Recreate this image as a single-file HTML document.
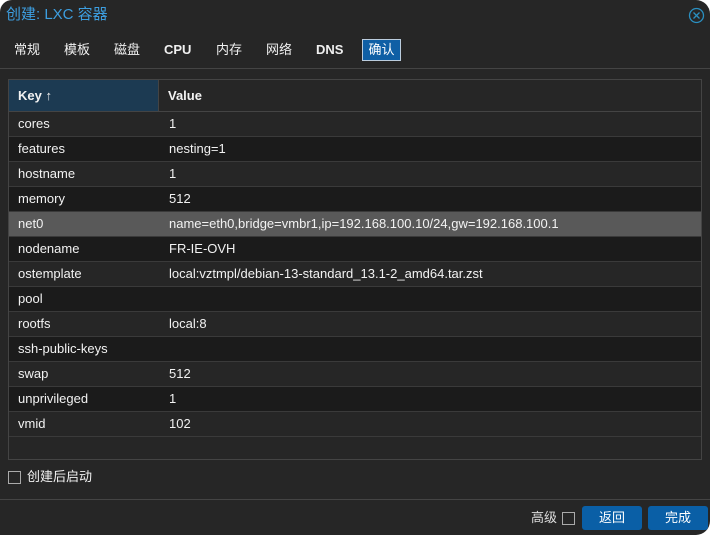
<!DOCTYPE html>
<html><head><meta charset="utf-8"><style>
*{box-sizing:border-box;margin:0;padding:0}
body{width:710px;height:535px;background:#fff;font-family:"Liberation Sans","Noto Sans CJK SC",sans-serif;font-size:13px;color:#f2f2f2;overflow:hidden;position:relative}
.dlg{position:absolute;left:0;top:0;width:710px;height:535px;background:#262626;border-radius:12px 14px 14px 0}
.title{position:absolute;left:6px;top:5px;font-size:15px;line-height:20px;color:#3d9ee0}
.close{position:absolute;left:688px;top:7px}
.tabs span{position:absolute;top:42px;height:16px;line-height:16px;font-size:13px;color:#f0f0f0}
.tabs span.l{font-weight:bold}
.tab-on{position:absolute;left:362px;top:39px;width:39px;height:22px;background:#0f5fa5;border:1px solid #bcd;color:#fff;text-align:center;line-height:20px}
.sep{position:absolute;left:0;width:710px;height:1px;background:#444}
.grid{position:absolute;left:8px;top:79px;width:694px;height:381px;border:1px solid #444;background:#262626}
.hdr{height:32px;display:flex;border-bottom:1px solid #444}
.hdr div{line-height:31px;padding-left:9px;font-weight:bold}
.row{height:25px;display:flex;border-bottom:1px solid #3a3a3a;line-height:24px}
.row div:first-child,.hdr div:first-child{width:150px}
.row div{padding-left:9px}
.row div:last-child{padding-left:10px}
.o{background:#262626}.e{background:#1b1b1b}.sel{background:#595959}
.btn{position:absolute;top:506px;width:60px;height:24px;background:#0a5fa6;border-radius:3px;color:#fff;text-align:center;line-height:24px}
.cb{position:absolute;width:13px;height:13px;border:1px solid #aaa}
</style></head><body>
<div class="dlg">
<div class="title">创建: LXC 容器</div>
<svg class="close" width="17" height="17" viewBox="0 0 17 17"><circle cx="8.5" cy="8.5" r="7" fill="none" stroke="#2a8fc0" stroke-width="1.3"/><path d="M5.5 5.5L11.5 11.5M11.5 5.5L5.5 11.5" stroke="#2a8fc0" stroke-width="1.3"/></svg>
<div class="tabs">
<span style="left:14px">常规</span><span style="left:64px">模板</span><span style="left:114px">磁盘</span><span class="l" style="left:164px">CPU</span><span style="left:216px">内存</span><span style="left:266px">网络</span><span class="l" style="left:316px">DNS</span>
</div>
<div class="tab-on">确认</div>
<div class="sep" style="top:68px"></div>
<div class="grid">
<div class="hdr"><div style="background:#1c3a52;border-right:1px solid #444">Key ↑</div><div>Value</div></div>
<div class="row o"><div>cores</div><div>1</div></div>
<div class="row e"><div>features</div><div>nesting=1</div></div>
<div class="row o"><div>hostname</div><div>1</div></div>
<div class="row e"><div>memory</div><div>512</div></div>
<div class="row sel"><div>net0</div><div>name=eth0,bridge=vmbr1,ip=192.168.100.10/24,gw=192.168.100.1</div></div>
<div class="row e"><div>nodename</div><div>FR-IE-OVH</div></div>
<div class="row o"><div>ostemplate</div><div>local:vztmpl/debian-13-standard_13.1-2_amd64.tar.zst</div></div>
<div class="row e"><div>pool</div><div></div></div>
<div class="row o"><div>rootfs</div><div>local:8</div></div>
<div class="row e"><div>ssh-public-keys</div><div></div></div>
<div class="row o"><div>swap</div><div>512</div></div>
<div class="row e"><div>unprivileged</div><div>1</div></div>
<div class="row o"><div>vmid</div><div>102</div></div>
</div>
<div class="cb" style="left:8px;top:471px"></div>
<div style="position:absolute;left:27px;top:469px;line-height:16px">创建后启动</div>
<div class="sep" style="top:499px"></div>
<div style="position:absolute;left:531px;top:510px;line-height:16px;color:#ddd">高级</div>
<div class="cb" style="left:562px;top:512px"></div>
<div class="btn" style="left:582px">返回</div>
<div class="btn" style="left:648px">完成</div>
</div>
</body></html>
